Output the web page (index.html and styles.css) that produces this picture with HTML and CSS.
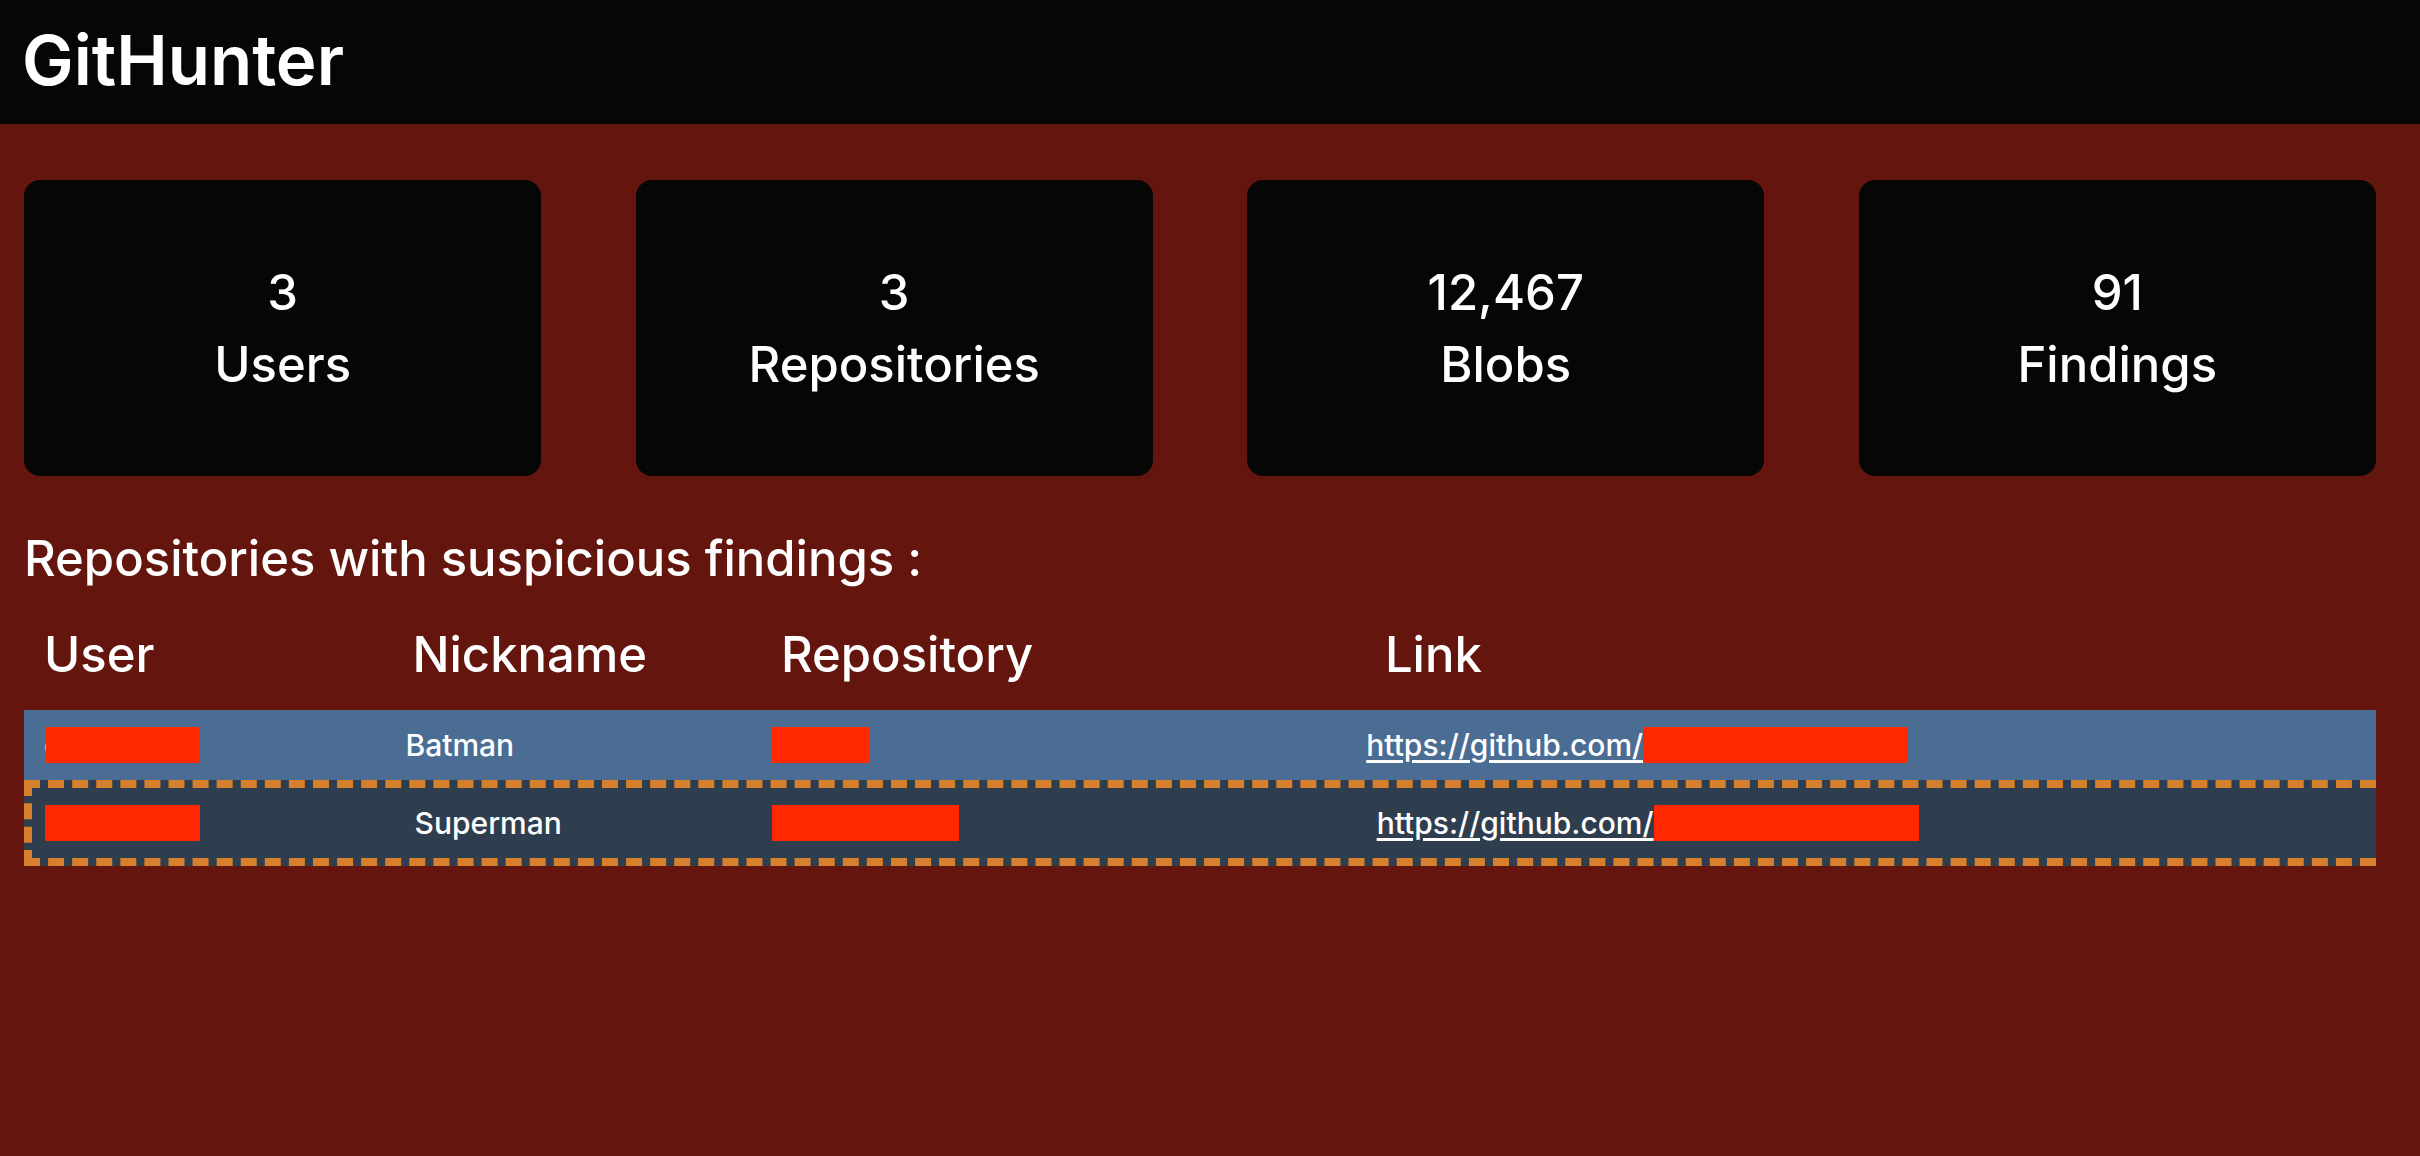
FILE: index.html
```html
<!DOCTYPE html>
<html lang="en">
<head>
<meta charset="utf-8">
<meta name="viewport" content="width=device-width, initial-scale=1">
<title>GitHunter</title>
<link rel="stylesheet" href="styles.css">
</head>
<body>
<header class="topbar">
  <h1 class="brand">GitHunter</h1>
</header>
<main class="content">
  <section class="stats">
    <div class="card"><span>3</span><span>Users</span></div>
    <div class="card"><span>3</span><span>Repositories</span></div>
    <div class="card"><span>12,467</span><span>Blobs</span></div>
    <div class="card"><span>91</span><span>Findings</span></div>
  </section>
  <h2 class="heading">Repositories with suspicious findings :</h2>
  <table class="repos">
    <thead>
      <tr class="row row-head">
        <th>User</th><th>Nickname</th><th>Repository</th><th>Link</th>
      </tr>
    </thead>
    <tbody>
      <tr class="row">
        <td>c<span class="redacted over-text" style="width:153px"></span></td>
        <td>Batman</td>
        <td><span class="redacted" style="width:97px"></span></td>
        <td><a href="https://github.com/">https://github.com/</a><span class="redacted" style="width:265px"></span></td>
      </tr>
      <tr class="row row-active">
        <td><span class="redacted flush" style="width:155px"></span></td>
        <td>Superman</td>
        <td><span class="redacted" style="width:187px"></span></td>
        <td><a href="https://github.com/">https://github.com/</a><span class="redacted" style="width:265px"></span></td>
      </tr>
    </tbody>
  </table>
</main>
</body>
</html>
```
FILE: styles.css
```css
* {
  box-sizing: border-box;
}

body {
  margin: 0;
  background: #64150e;
  color: #fff;
  font-family: Inter, "Liberation Sans", sans-serif;
  font-size: 30px;
  font-weight: 500;
}

.topbar {
  padding: 12px 22px 16px;
  background: #060606;
}

.brand {
  margin: 0;
  font-size: 69px;
  font-weight: 600;
  line-height: 96px;
}

.content {
  padding: 56px 44px 56px 24px;
}

.stats {
  display: grid;
  grid-template-columns: repeat(4, 1fr);
  gap: 4%;
}

.card {
  display: flex;
  flex-direction: column;
  align-items: center;
  padding: 77px 16px 75px;
  border-radius: 16px;
  background: #060606;
  font-size: 49px;
  line-height: 72px;
}

.heading {
  margin: 47px 0 0;
  font-size: 49px;
  font-weight: inherit;
  line-height: 72px;
}

.repos {
  display: block;
  margin-top: 12px;
}

.repos thead,
.repos tbody {
  display: block;
}

.row {
  display: grid;
  grid-template-columns: 15.5% 15.7% 25.5% 1fr;
  align-items: center;
  padding-left: 20px;
  background: #4b6d94;
  line-height: 70px;
}

.row-head {
  grid-template-columns: 15.8% 15.8% 25.9% 1fr;
  padding-bottom: 7px;
  background: none;
  font-size: 49px;
  line-height: 96px;
}

.row-active {
  grid-template-columns: 15.6% 15.4% 26% 1fr;
  border: 8px dashed #d67f2c;
  border-right: 0;
  background: #2f3e4e;
}

.row th,
.row td {
  display: flex;
  align-items: center;
  padding: 0;
  font-weight: inherit;
  text-align: left;
}

.row a {
  color: inherit;
  text-underline-offset: 4px;
}

.redacted {
  height: 36px;
  background: #ff2800;
}

.flush {
  margin-left: -7px;
}

.over-text {
  position: relative;
  margin-left: -15px;
}
```
